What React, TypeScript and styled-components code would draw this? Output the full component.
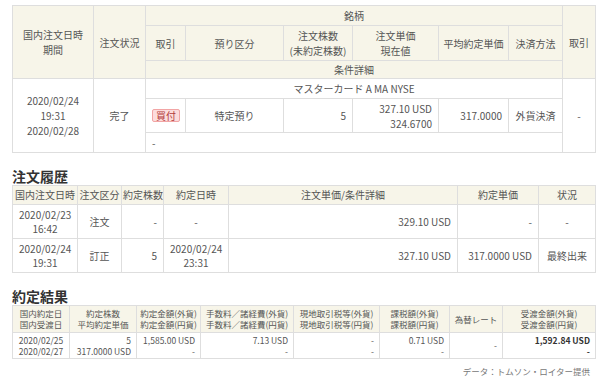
import React from 'react';
import styled, { createGlobalStyle } from 'styled-components';

const GlobalStyle = createGlobalStyle`
  html, body {
    margin: 0;
    padding: 0;
    background: #fff;
  }
  body {
    font-family: "Noto Sans CJK JP", "Noto Sans", sans-serif;
    color: #555;
  }
`;

const Page = styled.div`
  width: 583px;
  padding: 5px 0 0 12px;
`;

const Table = styled.table<{ $size: number; $line: number; $pad: number }>`
  width: 583px;
  border-collapse: collapse;
  table-layout: fixed;
  white-space: nowrap;
  font-size: ${({ $size }) => $size}px;
  line-height: ${({ $line }) => $line}px;
  color: #555;

  td {
    padding: 0 ${({ $pad }) => $pad}px;
  }
`;

const Th = styled.th`
  background: #f7f5e9;
  border: 1px solid #dedede;
  font-weight: normal;
  text-align: center;
  vertical-align: middle;
  padding: 0 1px;
  overflow: hidden;
`;

const Td = styled.td<{ $align?: 'left' | 'center' | 'right'; $strong?: boolean }>`
  border: 1px solid #dedede;
  text-align: ${({ $align }) => $align ?? 'center'};
  vertical-align: middle;
  font-weight: ${({ $strong }) => ($strong ? 'bold' : 'normal')};
  color: ${({ $strong }) => ($strong ? '#333' : '#555')};
`;

const Row = styled.tr<{ $h: number }>`
  height: ${({ $h }) => $h}px;
`;

const Title = styled.h2`
  margin: 14px 0 0;
  font-size: 14px;
  line-height: 18px;
  font-weight: bold;
  color: #333;
`;

const Badge = styled.span`
  display: inline-block;
  padding: 0 3px;
  line-height: 11px;
  border: 1px solid #f2a5a5;
  border-radius: 2px;
  background: #fcdcdc;
  color: #b23a3a;
`;

const Note = styled.div`
  margin-top: 6px;
  padding-right: 5px;
  text-align: right;
  font-size: 8.5px;
  line-height: 12px;
  color: #777;
`;

const cols1 = [81, 52, 40, 98, 69, 86, 70, 54, 33];
const cols2 = [65, 44, 42, 65, 229, 81, 57];
const cols3 = [57, 67, 64, 93, 86, 70, 53, 93];

const Cols = ({ widths }: { widths: number[] }) => (
  <colgroup>
    {widths.map((w, i) => (
      <col key={i} style={{ width: w }} />
    ))}
  </colgroup>
);

const history = [
  { date: '2020/02/23', time: '16:42', kind: '注文', qty: '-', exec: ['-'], price: '329.10 USD', unit: '-', status: '-' },
  { date: '2020/02/24', time: '19:31', kind: '訂正', qty: '5', exec: ['2020/02/24', '23:31'], price: '327.10 USD', unit: '317.0000 USD', status: '最終出来' },
];

export default function App() {
  return (
    <Page>
      <GlobalStyle />
      <Table $size={10} $line={15} $pad={6}>
        <Cols widths={cols1} />
        <thead>
          <Row $h={20}>
            <Th rowSpan={3}>国内注文日時<br />期間</Th>
            <Th rowSpan={3}>注文状況</Th>
            <Th colSpan={6}>銘柄</Th>
            <Th rowSpan={3}>取引</Th>
          </Row>
          <Row $h={35}>
            <Th>取引</Th>
            <Th>預り区分</Th>
            <Th>注文株数<br />(未約定株数)</Th>
            <Th>注文単価<br />現在値</Th>
            <Th>平均約定単価</Th>
            <Th>決済方法</Th>
          </Row>
          <Row $h={18}>
            <Th colSpan={6}>条件詳細</Th>
          </Row>
        </thead>
        <tbody>
          <Row $h={20}>
            <Td rowSpan={3}>2020/02/24<br />19:31<br />2020/02/28</Td>
            <Td rowSpan={3}>完了</Td>
            <Td colSpan={6}>マスターカード A MA NYSE</Td>
            <Td rowSpan={3}>-</Td>
          </Row>
          <Row $h={34}>
            <Td $align="left"><Badge>買付</Badge></Td>
            <Td>特定預り</Td>
            <Td $align="right">5</Td>
            <Td $align="right">327.10 USD<br />324.6700</Td>
            <Td $align="right">317.0000</Td>
            <Td>外貨決済</Td>
          </Row>
          <Row $h={20}>
            <Td colSpan={6} $align="left">-</Td>
          </Row>
        </tbody>
      </Table>

      <Title>注文履歴</Title>
      <Table $size={10} $line={14} $pad={6}>
        <Cols widths={cols2} />
        <thead>
          <Row $h={19}>
            <Th>国内注文日時</Th>
            <Th>注文区分</Th>
            <Th>約定株数</Th>
            <Th>約定日時</Th>
            <Th>注文単価/条件詳細</Th>
            <Th>約定単価</Th>
            <Th>状況</Th>
          </Row>
        </thead>
        <tbody>
          {history.map((h) => (
            <Row $h={34} key={h.date + h.time}>
              <Td>{h.date}<br />{h.time}</Td>
              <Td>{h.kind}</Td>
              <Td $align="right">{h.qty}</Td>
              <Td>{h.exec.map((e, i) => (
                <React.Fragment key={i}>{i > 0 && <br />}{e}</React.Fragment>
              ))}</Td>
              <Td $align="right">{h.price}</Td>
              <Td $align="right">{h.unit}</Td>
              <Td>{h.status}</Td>
            </Row>
          ))}
        </tbody>
      </Table>

      <Title>約定結果</Title>
      <Table $size={8.5} $line={11} $pad={5}>
        <Cols widths={cols3} />
        <thead>
          <Row $h={27}>
            <Th>国内約定日<br />国内受渡日</Th>
            <Th>約定株数<br />平均約定単価</Th>
            <Th>約定金額(外貨)<br />約定金額(円貨)</Th>
            <Th>手数料／諸経費(外貨)<br />手数料／諸経費(円貨)</Th>
            <Th>現地取引税等(外貨)<br />現地取引税等(円貨)</Th>
            <Th>課税額(外貨)<br />課税額(円貨)</Th>
            <Th>為替レート</Th>
            <Th>受渡金額(外貨)<br />受渡金額(円貨)</Th>
          </Row>
        </thead>
        <tbody>
          <Row $h={26}>
            <Td>2020/02/25<br />2020/02/27</Td>
            <Td $align="right">5<br />317.0000 USD</Td>
            <Td $align="right">1,585.00 USD<br />-</Td>
            <Td $align="right">7.13 USD<br />-</Td>
            <Td $align="right">-<br />-</Td>
            <Td $align="right">0.71 USD<br />-</Td>
            <Td $align="right">-</Td>
            <Td $align="right" $strong>1,592.84 USD<br />-</Td>
          </Row>
        </tbody>
      </Table>
      <Note>データ：トムソン・ロイター提供</Note>
    </Page>
  );
}
